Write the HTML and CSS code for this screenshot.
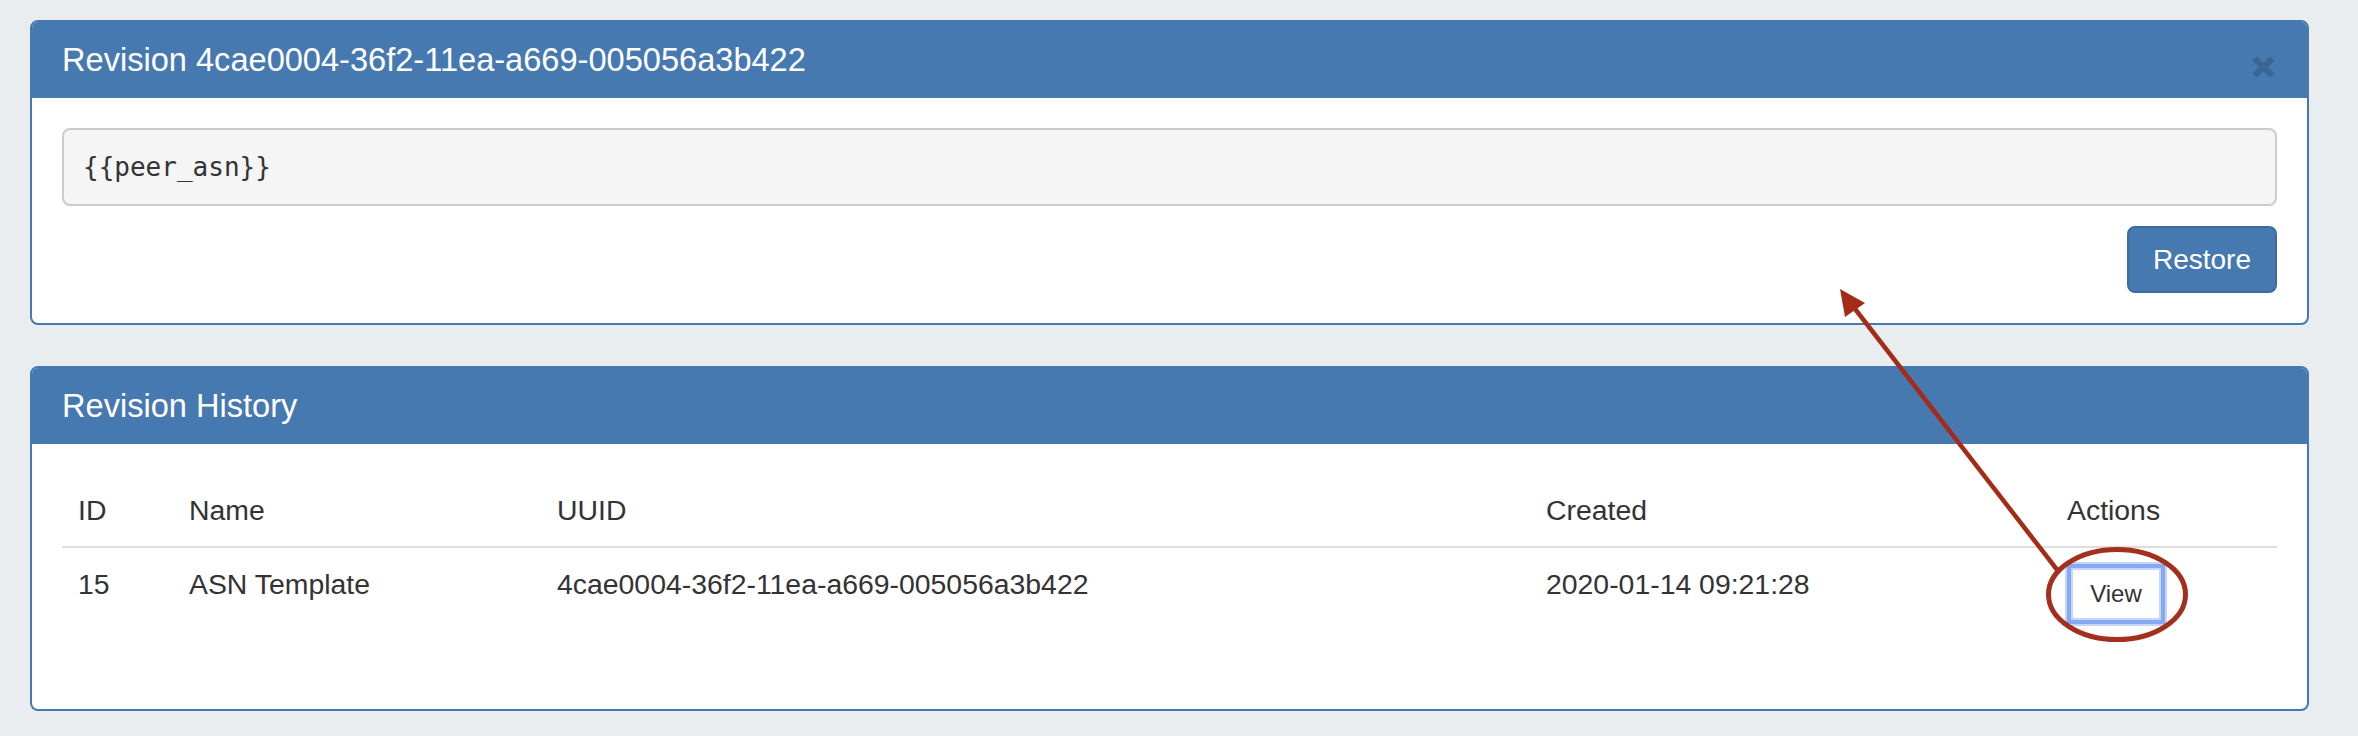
FILE: index.html
```html
<!DOCTYPE html>
<html lang="en">
<head>
<meta charset="utf-8">
<title>Revision</title>
<link rel="stylesheet" href="styles.css">
</head>
<body>
<div class="page">
  <section class="panel">
    <div class="panel-heading">
      <h3 class="panel-title">Revision 4cae0004-36f2-11ea-a669-005056a3b422</h3>
      <button class="close" aria-label="Close">
        <svg viewBox="0 0 23 22" width="23" height="22"><path d="M2.5 2.5 L20.5 19.5 M20.5 2.5 L2.5 19.5" stroke="#3b6592" stroke-width="6" fill="none"/></svg>
      </button>
    </div>
    <div class="panel-body">
      <pre class="code">{{peer_asn}}</pre>
      <div class="form-actions"><button class="btn btn-primary">Restore</button></div>
    </div>
  </section>

  <section class="panel panel-history">
    <div class="panel-heading">
      <h3 class="panel-title">Revision History</h3>
    </div>
    <div class="panel-body">
      <table class="table">
        <colgroup>
          <col class="col-id"><col class="col-name"><col class="col-uuid"><col class="col-created"><col class="col-actions">
        </colgroup>
        <thead>
          <tr><th>ID</th><th>Name</th><th>UUID</th><th>Created</th><th>Actions</th></tr>
        </thead>
        <tbody>
          <tr>
            <td>15</td>
            <td>ASN Template</td>
            <td>4cae0004-36f2-11ea-a669-005056a3b422</td>
            <td>2020-01-14 09:21:28</td>
            <td><button class="btn btn-default btn-focus">View</button></td>
          </tr>
        </tbody>
      </table>
    </div>
  </section>
</div>

<svg class="annotation" viewBox="0 0 2358 736" width="2358" height="736" aria-hidden="true">
  <line x1="1852" y1="305" x2="2058" y2="571" stroke="#a52b19" stroke-width="4.5"/>
  <polygon points="1840,289 1845,317 1865,303" fill="#a52b19"/>
  <ellipse cx="2117" cy="594.5" rx="68.5" ry="45" fill="none" stroke="#a3301f" stroke-width="5"/>
</svg>
</body>
</html>
```

FILE: styles.css
```css
html, body {
  margin: 0;
  padding: 0;
}

body {
  background: #e9edf0;
  font-family: "Liberation Sans", Arial, Helvetica, sans-serif;
  color: #333;
  font-size: 28.4px;
  line-height: 40px;
  position: relative;
  width: 2358px;
  height: 736px;
  overflow: hidden;
}

.page {
  padding: 20px 49px 0 30px;
}

.panel {
  background: #fff;
  border: 2px solid #4779b1;
  border-radius: 8px;
  overflow: hidden;
}

.panel-history {
  margin-top: 41px;
}

.panel-heading {
  background: #4779b1;
  display: flex;
  justify-content: space-between;
  align-items: flex-start;
  padding: 20px 30px;
}

.panel-title {
  margin: 0;
  font-size: 32.6px;
  line-height: 36px;
  font-weight: normal;
  color: #fff;
}

.close {
  background: none;
  border: 0;
  padding: 0;
  margin: 14px 2px 0 0;
  width: 23px;
  height: 22px;
  display: block;
}

.close svg {
  display: block;
}

.panel-body {
  padding: 30px;
}

.code {
  margin: 0 0 20px;
  padding: 18px 19px;
  background: #f5f5f5;
  border: 2px solid #cccccc;
  border-radius: 8px;
  font-family: "DejaVu Sans Mono", "Liberation Mono", monospace;
  font-size: 26px;
  line-height: 38px;
  color: #333;
}

.form-actions {
  display: flex;
  justify-content: flex-end;
}

.btn {
  font-family: "Liberation Sans", Arial, Helvetica, sans-serif;
  cursor: pointer;
}

.btn-primary {
  background: #4779b1;
  color: #fff;
  border: 2px solid #3d6ca3;
  border-radius: 8px;
  font-size: 28px;
  line-height: 39px;
  padding: 12px 24px;
}

.table {
  width: 100%;
  table-layout: fixed;
  border-collapse: collapse;
  margin-bottom: 39px;
}

.col-id { width: 111px; }
.col-name { width: 368px; }
.col-uuid { width: 989px; }
.col-created { width: 521px; }
.col-actions { width: 226px; }

.table th,
.table td {
  text-align: left;
  font-weight: normal;
  padding: 16px;
  vertical-align: top;
  line-height: 40px;
  white-space: nowrap;
}

.table th {
  border-bottom: 2px solid #dddddd;
}

.btn-default {
  background: #fff;
  color: #333;
  font-size: 24px;
  line-height: 36px;
  width: 98px;
  height: 60px;
  padding: 0;
  border: 4px solid #86a9f4;
  border-radius: 0;
  box-shadow: inset 0 0 0 2px #c6d6fa, 0 0 0 2px #c6d6fa;
  display: block;
}

.annotation {
  position: absolute;
  left: 0;
  top: 0;
  pointer-events: none;
}
```
